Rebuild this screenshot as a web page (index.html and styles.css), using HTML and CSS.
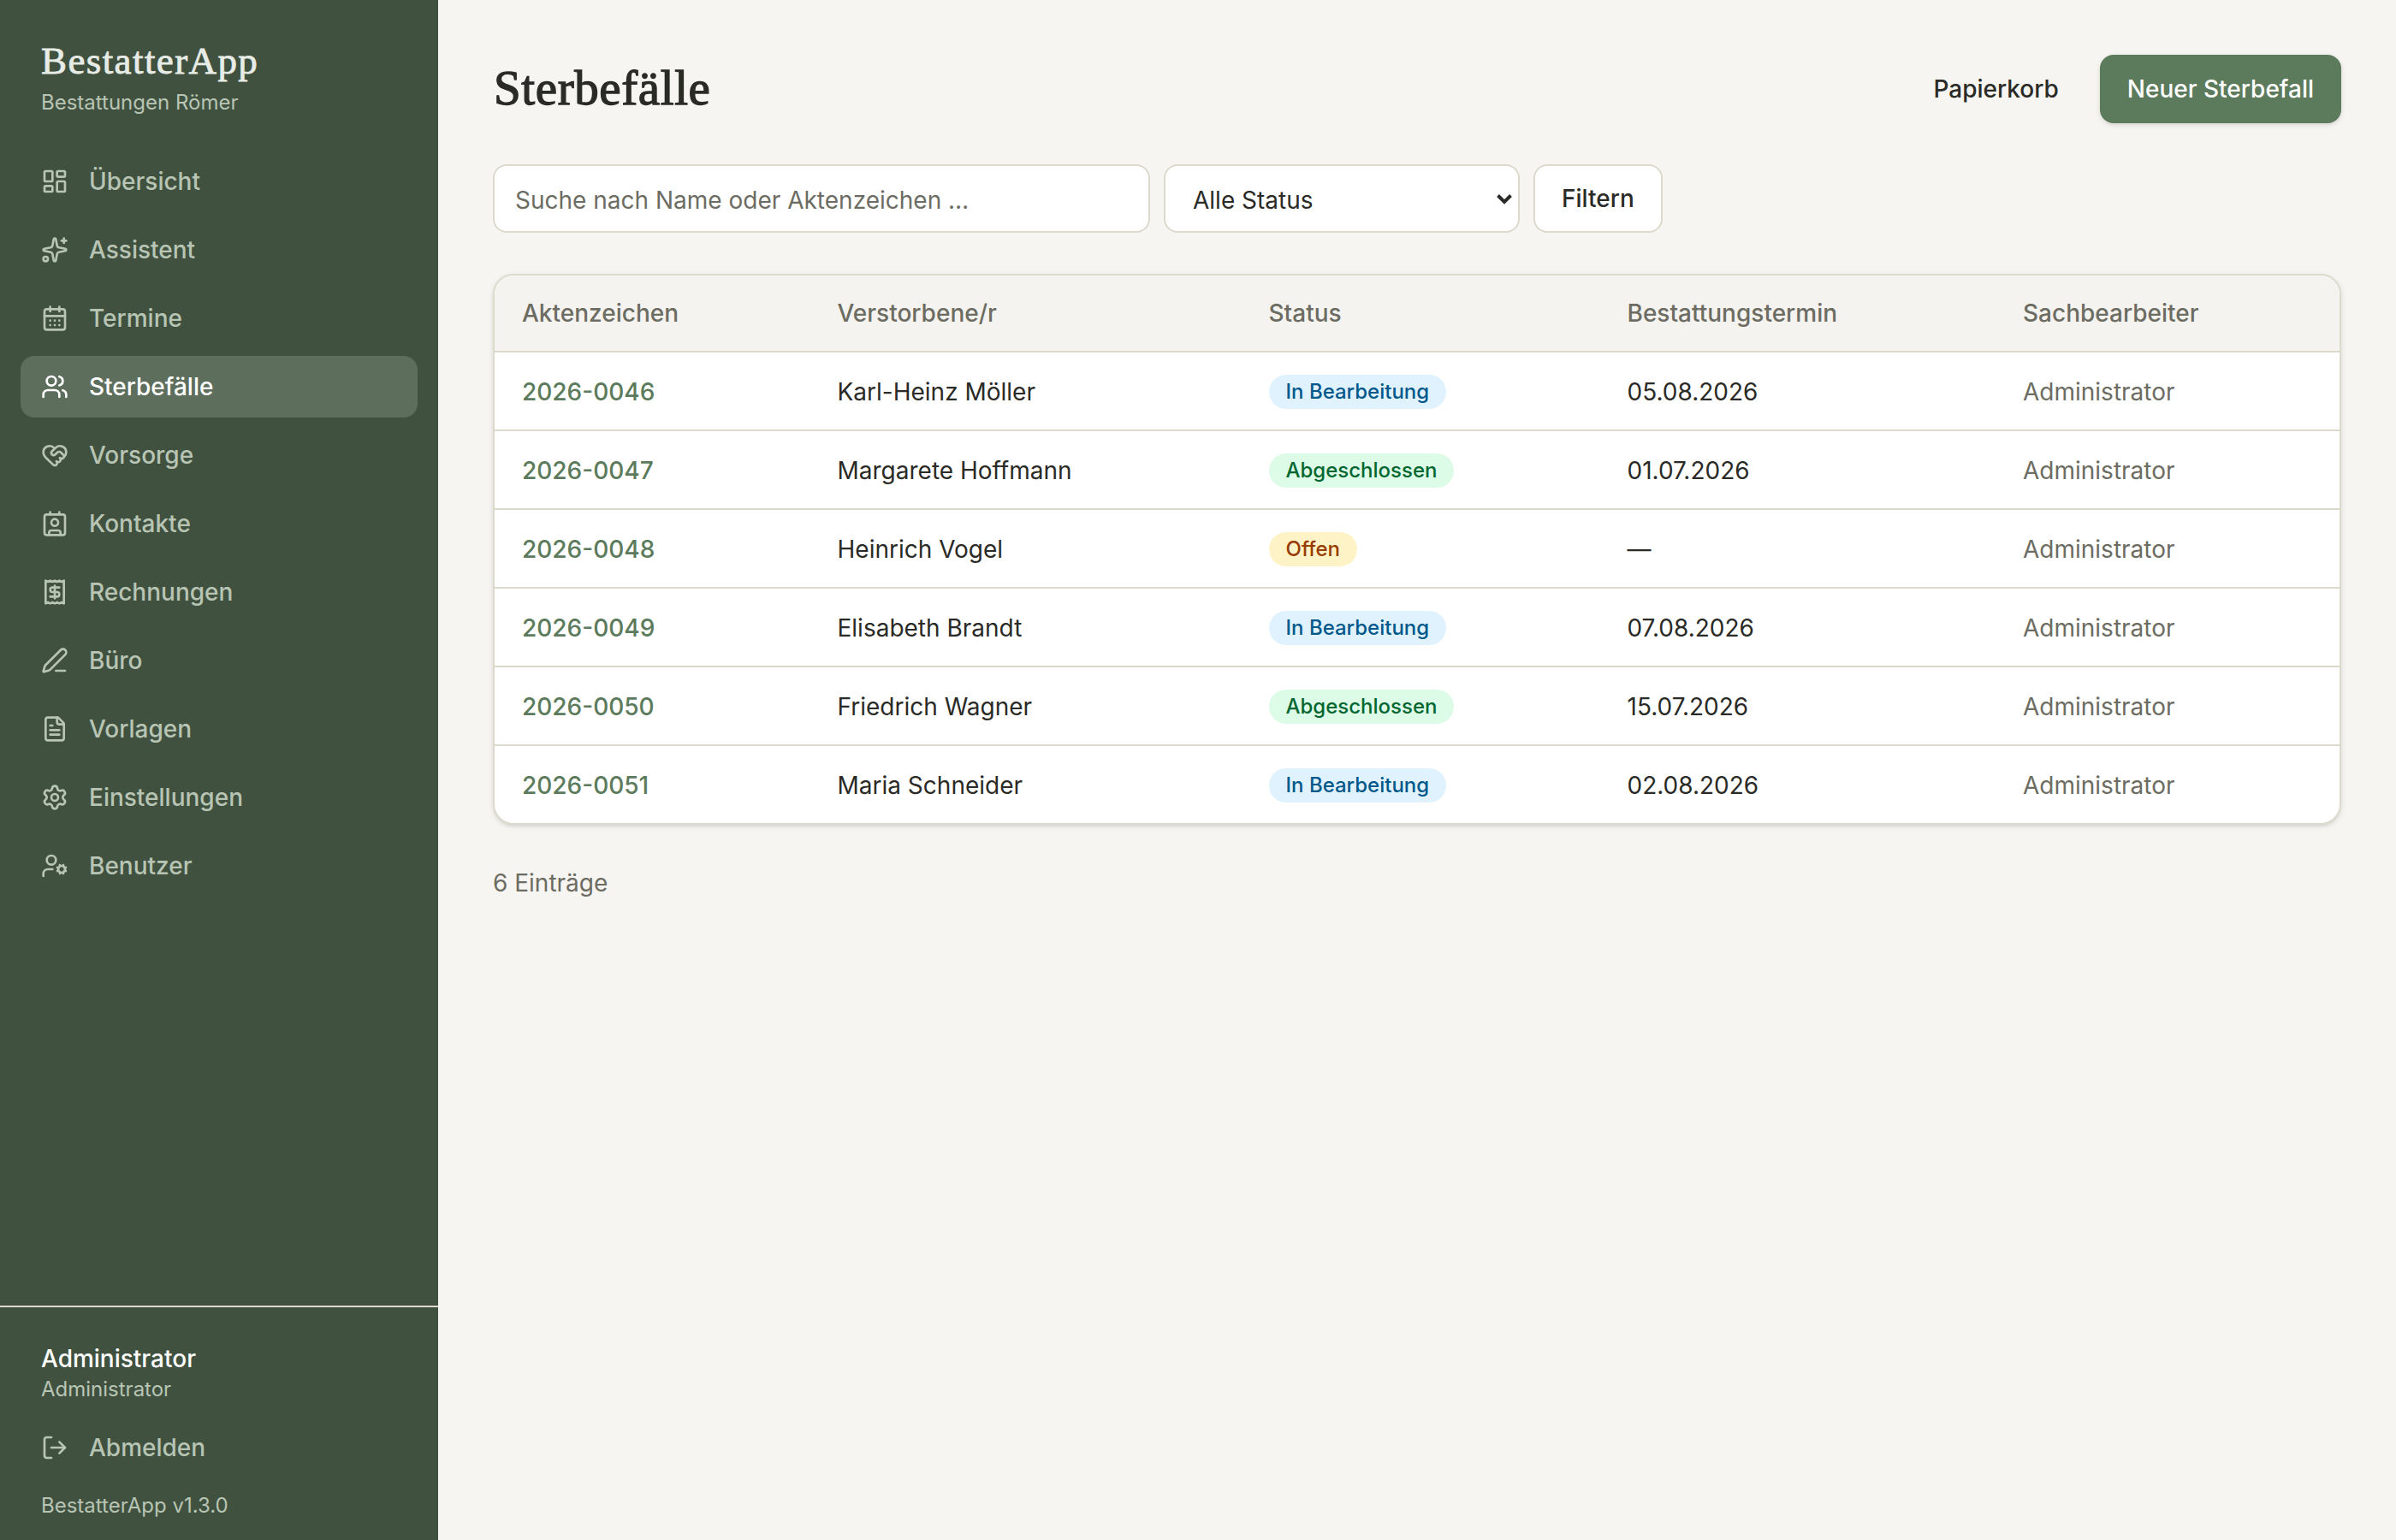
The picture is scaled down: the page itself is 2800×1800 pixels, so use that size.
FILE: index.html
```
<!DOCTYPE html>
<html lang="de">
<head>
    <meta charset="UTF-8">
    <meta name="viewport" content="width=device-width, initial-scale=1.0">
    <title>Sterbefälle – BestatterApp</title>
    <link rel="stylesheet" href="styles.css">
</head>
<body>
    <aside class="sidebar">
        <div class="brand">
            <div class="brand-name">BestatterApp</div>
            <div class="brand-sub">Bestattungen Römer</div>
        </div>
        <nav class="nav">
            <a class="nav-item">
                <svg class="icon" viewBox="0 0 24 24"><rect width="7" height="9" x="3" y="3" rx="1"/><rect width="7" height="5" x="14" y="3" rx="1"/><rect width="7" height="9" x="14" y="12" rx="1"/><rect width="7" height="5" x="3" y="16" rx="1"/></svg>
                Übersicht
            </a>
            <a class="nav-item">
                <svg class="icon" viewBox="0 0 24 24"><path d="M11.017 2.814a1 1 0 0 1 1.966 0l1.051 5.558a2 2 0 0 0 1.594 1.594l5.558 1.051a1 1 0 0 1 0 1.966l-5.558 1.051a2 2 0 0 0-1.594 1.594l-1.051 5.558a1 1 0 0 1-1.966 0l-1.051-5.558a2 2 0 0 0-1.594-1.594l-5.558-1.051a1 1 0 0 1 0-1.966l5.558-1.051a2 2 0 0 0 1.594-1.594z"/><path d="M20 2v4"/><path d="M22 4h-4"/><circle cx="4" cy="20" r="2"/></svg>
                Assistent
            </a>
            <a class="nav-item">
                <svg class="icon" viewBox="0 0 24 24"><path d="M8 2v4"/><path d="M16 2v4"/><rect width="18" height="18" x="3" y="4" rx="2"/><path d="M3 10h18"/><path d="M8 14h.01"/><path d="M12 14h.01"/><path d="M16 14h.01"/><path d="M8 18h.01"/><path d="M12 18h.01"/><path d="M16 18h.01"/></svg>
                Termine
            </a>
            <a class="nav-item active">
                <svg class="icon" viewBox="0 0 24 24"><path d="M16 21v-2a4 4 0 0 0-4-4H6a4 4 0 0 0-4 4v2"/><circle cx="9" cy="7" r="4"/><path d="M22 21v-2a4 4 0 0 0-3-3.87"/><path d="M16 3.13a4 4 0 0 1 0 7.75"/></svg>
                Sterbefälle
            </a>
            <a class="nav-item">
                <svg class="icon" viewBox="0 0 24 24"><path d="M19.414 14.414C21 12.828 22 11.5 22 9.5a5.5 5.5 0 0 0-9.591-3.676.6.6 0 0 1-.818.001A5.5 5.5 0 0 0 2 9.5c0 2.3 1.5 4 3 5.5l5.535 5.362a2 2 0 0 0 2.879.052 2.12 2.12 0 0 0-.004-3 2.124 2.124 0 1 0 3-3 2.124 2.124 0 0 0 3.004 0 2 2 0 0 0 0-2.828l-1.881-1.882a2.41 2.41 0 0 0-3.409 0l-1.71 1.71a2 2 0 0 1-2.828 0 2 2 0 0 1 0-2.828l2.823-2.762"/></svg>
                Vorsorge
            </a>
            <a class="nav-item">
                <svg class="icon" viewBox="0 0 24 24"><path d="M16 2v2"/><path d="M7 22v-2a2 2 0 0 1 2-2h6a2 2 0 0 1 2 2v2"/><path d="M8 2v2"/><circle cx="12" cy="11" r="3"/><rect x="3" y="4" width="18" height="18" rx="2"/></svg>
                Kontakte
            </a>
            <a class="nav-item">
                <svg class="icon" viewBox="0 0 24 24"><path d="M4 2v20l2-1 2 1 2-1 2 1 2-1 2 1 2-1 2 1V2l-2 1-2-1-2 1-2-1-2 1-2-1-2 1Z"/><path d="M16 8h-6a2 2 0 1 0 0 4h4a2 2 0 1 1 0 4H8"/><path d="M12 17.5v-11"/></svg>
                Rechnungen
            </a>
            <a class="nav-item">
                <svg class="icon" viewBox="0 0 24 24"><path d="M13 21h8"/><path d="M21.174 6.812a1 1 0 0 0-3.986-3.987L3.842 16.174a2 2 0 0 0-.5.83l-1.321 4.352a.5.5 0 0 0 .623.622l4.353-1.32a2 2 0 0 0 .83-.497z"/></svg>
                Büro
            </a>
            <a class="nav-item">
                <svg class="icon" viewBox="0 0 24 24"><path d="M15 2H6a2 2 0 0 0-2 2v16a2 2 0 0 0 2 2h12a2 2 0 0 0 2-2V7Z"/><path d="M14 2v4a2 2 0 0 0 2 2h4"/><path d="M10 9H8"/><path d="M16 13H8"/><path d="M16 17H8"/></svg>
                Vorlagen
            </a>
            <a class="nav-item">
                <svg class="icon" viewBox="0 0 24 24"><path d="M9.671 4.136a2.34 2.34 0 0 1 4.659 0 2.34 2.34 0 0 0 3.319 1.915 2.34 2.34 0 0 1 2.33 4.033 2.34 2.34 0 0 0 0 3.831 2.34 2.34 0 0 1-2.33 4.033 2.34 2.34 0 0 0-3.319 1.915 2.34 2.34 0 0 1-4.659 0 2.34 2.34 0 0 0-3.32-1.915 2.34 2.34 0 0 1-2.33-4.033 2.34 2.34 0 0 0 0-3.831A2.34 2.34 0 0 1 6.35 6.051a2.34 2.34 0 0 0 3.319-1.915"/><circle cx="12" cy="12" r="3"/></svg>
                Einstellungen
            </a>
            <a class="nav-item">
                <svg class="icon" viewBox="0 0 24 24"><path d="M10 15H6a4 4 0 0 0-4 4v2"/><path d="m14.305 16.53.923-.382"/><path d="m15.228 13.852-.923-.383"/><path d="m16.852 12.228-.383-.923"/><path d="m16.852 17.772-.383.924"/><path d="m19.148 12.228.383-.923"/><path d="m19.53 18.696-.382-.924"/><path d="m20.772 13.852.924-.383"/><path d="m20.772 16.148.924.383"/><circle cx="18" cy="15" r="3"/><circle cx="9" cy="7" r="4"/></svg>
                Benutzer
            </a>
        </nav>
        <div class="sidebar-footer">
            <div class="user-name">Administrator</div>
            <div class="user-role">Administrator</div>
            <a class="logout">
                <svg class="icon" viewBox="0 0 24 24"><path d="m16 17 5-5-5-5"/><path d="M21 12H9"/><path d="M9 21H5a2 2 0 0 1-2-2V5a2 2 0 0 1 2-2h4"/></svg>
                Abmelden
            </a>
            <div class="version">BestatterApp v1.3.0</div>
        </div>
    </aside>

    <main class="main">
        <header class="page-header">
            <h1>Sterbefälle</h1>
            <div class="actions">
                <a class="btn btn-ghost">Papierkorb</a>
                <a class="btn btn-primary">Neuer Sterbefall</a>
            </div>
        </header>

        <form class="filter">
            <input class="field search" type="text" placeholder="Suche nach Name oder Aktenzeichen …">
            <div class="field status-select">
                <span>Alle Status</span>
                <svg class="chevron" viewBox="0 0 20 14"><path d="M2.5 3.5 10 11l7.5-7.5"/></svg>
            </div>
            <button class="btn btn-outline" type="button">Filtern</button>
        </form>

        <div class="card">
            <table>
                <colgroup>
                    <col class="col-nr">
                    <col class="col-name">
                    <col class="col-status">
                    <col class="col-termin">
                    <col>
                </colgroup>
                <thead>
                    <tr><th>Aktenzeichen</th><th>Verstorbene/r</th><th>Status</th><th>Bestattungstermin</th><th>Sachbearbeiter</th></tr>
                </thead>
                <tbody>
                    <tr>
                        <td class="nr">2026-0046</td>
                        <td>Karl-Heinz Möller</td>
                        <td class="status"><span class="badge blue">In Bearbeitung</span></td>
                        <td>05.08.2026</td>
                        <td class="muted">Administrator</td>
                    </tr>
                    <tr>
                        <td class="nr">2026-0047</td>
                        <td>Margarete Hoffmann</td>
                        <td class="status"><span class="badge green">Abgeschlossen</span></td>
                        <td>01.07.2026</td>
                        <td class="muted">Administrator</td>
                    </tr>
                    <tr>
                        <td class="nr">2026-0048</td>
                        <td>Heinrich Vogel</td>
                        <td class="status"><span class="badge amber">Offen</span></td>
                        <td>—</td>
                        <td class="muted">Administrator</td>
                    </tr>
                    <tr>
                        <td class="nr">2026-0049</td>
                        <td>Elisabeth Brandt</td>
                        <td class="status"><span class="badge blue">In Bearbeitung</span></td>
                        <td>07.08.2026</td>
                        <td class="muted">Administrator</td>
                    </tr>
                    <tr>
                        <td class="nr">2026-0050</td>
                        <td>Friedrich Wagner</td>
                        <td class="status"><span class="badge green">Abgeschlossen</span></td>
                        <td>15.07.2026</td>
                        <td class="muted">Administrator</td>
                    </tr>
                    <tr>
                        <td class="nr">2026-0051</td>
                        <td>Maria Schneider</td>
                        <td class="status"><span class="badge blue">In Bearbeitung</span></td>
                        <td>02.08.2026</td>
                        <td class="muted">Administrator</td>
                    </tr>
                </tbody>
            </table>
        </div>
        <p class="count">6 Einträge</p>
    </main>
</body>
</html>
```
FILE: styles.css
```
* { box-sizing: border-box; }
body {
    margin: 0;
    height: 1800px;
    display: flex;
    overflow: hidden;
    background: #f6f5f1;
    color: #2a2a26;
    font-family: Inter, sans-serif;
    font-size: 28px;
    line-height: 40px;
}

/* Seitenleiste */
.sidebar {
    width: 512px;
    flex-shrink: 0;
    display: flex;
    flex-direction: column;
    background: #40523f;
    color: #b8c4b4;
}
.brand { padding: 40px 48px 32px; }
.brand-name {
    height: 64px;
    font-family: "Liberation Serif", serif;
    font-size: 45px;
    line-height: 62px;
    letter-spacing: 1.4px;
    color: #e8ece6;
    -webkit-text-stroke: 0.8px #e8ece6;
}
.brand-sub { font-size: 24px; line-height: 32px; }
.nav {
    flex: 1;
    display: flex;
    flex-direction: column;
    gap: 8px;
    padding: 8px 24px;
}
.nav-item, .logout {
    display: flex;
    align-items: center;
    gap: 24px;
    height: 72px;
    font-weight: 500;
}
.nav-item { padding: 0 24px; border-radius: 16px; }
.nav-item.active { background: #5d6e5d; color: #fff; }
.icon {
    width: 32px;
    height: 32px;
    flex-shrink: 0;
    fill: none;
    stroke: currentColor;
    stroke-width: 2;
    stroke-linecap: round;
    stroke-linejoin: round;
}
.sidebar-footer { border-top: 2px solid #ddd9ce; padding: 40px 48px 24px; }
.user-name { font-weight: 500; color: #fff; }
.user-role { font-size: 24px; line-height: 32px; }
.logout { margin-top: 16px; }
.version { margin-top: 16px; font-size: 24px; line-height: 32px; }

/* Inhalt */
.main { flex: 1; padding: 64px; }
.page-header { display: flex; justify-content: space-between; align-items: center; height: 80px; }
h1 {
    margin: 0;
    padding: 0 0 2px 1px;
    font-family: "Liberation Serif", serif;
    font-size: 57px;
    font-weight: 400;
    letter-spacing: 0.6px;
    -webkit-text-stroke: 1.3px #2a2a26;
}
.actions { display: flex; gap: 16px; }
.btn {
    display: flex;
    align-items: center;
    height: 80px;
    padding: 0 32px;
    border-radius: 16px;
    font: 500 28px/40px Inter, sans-serif;
    color: #2a2a26;
}
.btn-primary { background: #5c7b5c; color: #fff; box-shadow: 0 2px 6px rgba(0,0,0,0.1), 0 2px 4px -2px rgba(0,0,0,0.1); }
.btn-outline { width: 151px; padding: 0 31px; background: #fff; border: 2px solid #dcdacd; }
.filter { display: flex; gap: 16px; margin: 48px 0; }
.field {
    height: 80px;
    border: 2px solid #dcdacd;
    border-radius: 16px;
    background: #fff;
    color: #2a2a26;
    font: 400 28px/40px Inter, sans-serif;
}
.search { width: 768px; padding: 4px 24px 0; }
.search::placeholder { color: #6c6c63; opacity: 1; }
.status-select {
    display: flex;
    align-items: center;
    justify-content: space-between;
    width: 416px;
    padding: 4px 6px 0 32px;
}
.chevron { width: 20px; height: 14px; margin-top: -4px; fill: none; stroke: #2a2a26; stroke-width: 4; }

.card {
    border: 2px solid #dcdacd;
    border-radius: 24px;
    background: #fff;
    overflow: hidden;
    box-shadow: 0 2px 6px rgba(0,0,0,0.1), 0 2px 4px -2px rgba(0,0,0,0.1);
}
table { width: 100%; table-layout: fixed; border-collapse: separate; border-spacing: 0; }
.col-nr { width: 368.5px; }
.col-name { width: 504px; }
.col-status { width: 419px; }
.col-termin { width: 462.5px; }
th, td { height: 92px; padding: 0 32px; text-align: left; border-bottom: 2px solid #dcdacd; }
th { height: 90px; background: #f5f3ef; font-weight: 500; color: #6c6c63; }
td { padding-top: 2px; }
td.status { padding-top: 0; }
tbody tr:last-child td { height: 90px; border-bottom: 0; }
.nr { font-weight: 500; color: #5c7b5c; }
.muted { color: #6c6c63; }
.badge {
    display: inline-block;
    vertical-align: middle;
    padding: 4px 20px;
    border-radius: 20px;
    font-size: 24px;
    font-weight: 500;
    line-height: 32px;
}
.blue { background: #dff2fe; color: #00598a; }
.green { background: #dcfce7; color: #016630; }
.amber { background: #fef3c6; color: #973c00; }
.count { margin: 48px 0 0; color: #6c6c63; }
```
